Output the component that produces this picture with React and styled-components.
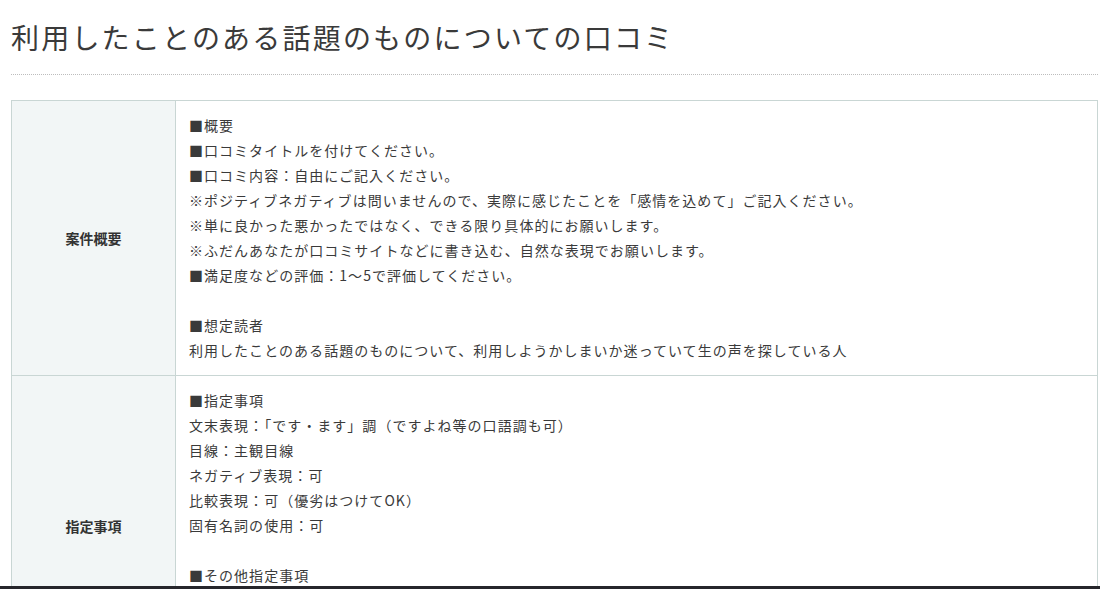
import React from 'react';
import styled, { createGlobalStyle } from 'styled-components';

const GlobalStyle = createGlobalStyle`
  html, body {
    margin: 0;
    padding: 0;
    background: #fff;
    overflow: hidden;
  }
  body {
    font-family: "Noto Sans CJK JP", "Noto Sans", sans-serif;
    color: #333;
  }
`;

const rows = [
  {
    label: '案件概要',
    lines: [
      '■概要',
      '■口コミタイトルを付けてください。',
      '■口コミ内容：自由にご記入ください。',
      '※ポジティブネガティブは問いませんので、実際に感じたことを「感情を込めて」ご記入ください。',
      '※単に良かった悪かったではなく、できる限り具体的にお願いします。',
      '※ふだんあなたが口コミサイトなどに書き込む、自然な表現でお願いします。',
      '■満足度などの評価：1～5で評価してください。',
      '',
      '■想定読者',
      '利用したことのある話題のものについて、利用しようかしまいか迷っていて生の声を探している人',
    ],
  },
  {
    label: '指定事項',
    lines: [
      '■指定事項',
      '文末表現：「です・ます」調（ですよね等の口語調も可）',
      '目線：主観目線',
      'ネガティブ表現：可',
      '比較表現：可（優劣はつけてOK）',
      '固有名詞の使用：可',
      '',
      '■その他指定事項',
      '誤字脱字のないようにご注意ください。',
      'コピペは禁止です。',
      '',
    ],
  },
];

const App = () => (
  <>
    <GlobalStyle />
    <Page>
      <Title>利用したことのある話題のものについての口コミ</Title>
      <Divider />
      <Table>
        <tbody>
          {rows.map(row => (
            <tr key={row.label}>
              <LabelCell>{row.label}</LabelCell>
              <BodyCell>
                {row.lines.map((line, i) => (
                  <Line key={i}>{line || '\u00a0'}</Line>
                ))}
              </BodyCell>
            </tr>
          ))}
        </tbody>
      </Table>
    </Page>
    <BottomBar />
  </>
);

export default App;

const Page = styled.div`
  padding: 18px 2px 0 11px;
  height: 589px;
  box-sizing: border-box;
  overflow: hidden;
`;

const Title = styled.h1`
  margin: 0;
  font-size: 28px;
  line-height: 39px;
  font-weight: 400;
  letter-spacing: 2.2px;
  color: #3a3a3a;
`;

const Divider = styled.hr`
  margin: 17px 0 25px;
  border: 0;
  border-top: 1px dotted #bdbdbd;
  height: 0;
`;

const Table = styled.table`
  width: 100%;
  border-collapse: collapse;
  border: 1px solid #c9d6d4;
`;

const LabelCell = styled.th`
  width: 139px;
  background: #f2f6f6;
  border: 1px solid #c9d6d4;
  font-size: 14px;
  font-weight: 700;
  color: #333;
  text-align: center;
  vertical-align: middle;
  padding: 12px;
`;

const BodyCell = styled.td`
  border: 1px solid #c9d6d4;
  padding: 12px 13px;
  vertical-align: top;
`;

const Line = styled.div`
  font-size: 14px;
  letter-spacing: 1.03px;
  line-height: 25px;
  color: #3a3a3a;
  white-space: nowrap;
`;

const BottomBar = styled.div`
  position: fixed;
  left: 0;
  right: 0;
  bottom: 0;
  height: 3px;
  background: #26262b;
`;
